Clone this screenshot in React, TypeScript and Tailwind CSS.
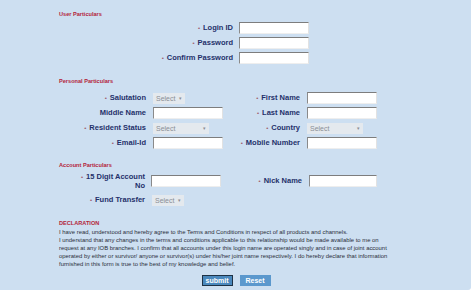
import React from 'react';

const font = "font-['Liberation_Sans',Arial,sans-serif]";

const Req = () => <span className="inline-block text-[6px] leading-none text-[#a0606e] mr-[3px]">•</span>;

const Label: React.FC<{ text: string; req?: boolean; className?: string }> = ({ text, req = true, className = '' }) => (
  <div className={`h-[12px] flex items-center justify-end text-[7.5px] font-bold text-[#24306a] leading-none whitespace-nowrap ${className}`}>
    {req && <Req />}
    {text}
  </div>
);

const TextBox: React.FC<{ w?: string }> = ({ w = 'w-[70px]' }) => (
  <div className={`${w} h-[12px] bg-white border border-t-[#7d7d7d] border-l-[#8a8a8a] border-r-[#e2e2e2] border-b-[#eeeeee]`} />
);

const SelectBox: React.FC<{ w: string }> = ({ w }) => (
  <div className={`${w} h-[11px] bg-[#e4e9ee] flex items-center justify-between px-[3px] text-[7px] leading-none text-[#8b8f96]`}>
    <span>Select</span>
    <span className="text-[5px]">▾</span>
  </div>
);

const Heading: React.FC<{ children: React.ReactNode; className?: string }> = ({ children, className = '' }) => (
  <div className={`pl-[59px] text-[5.6px] font-bold text-[#b3243a] leading-[8px] ${className}`}>{children}</div>
);

export default function App() {
  return (
    <div className={`w-[474px] h-[292px] bg-white ${font}`}>
      <div className="w-[471px] h-[290px] bg-[#cddff1] rounded-br-[3px] pt-[10px]">
        <Heading>User Particulars</Heading>

        <div className="mt-[4px] flex flex-col gap-[3px]">
          {['Login ID', 'Password', 'Confirm Password'].map((t) => (
            <div key={t} className="flex items-center">
              <Label text={t} className="w-[233px]" />
              <div className="ml-[6px]">
                <TextBox />
              </div>
            </div>
          ))}
        </div>

        <Heading className="mt-[13px]">Personal Particulars</Heading>

        <div className="mt-[7px] grid grid-cols-[146px_70px_70px_70px] gap-x-[7px] gap-y-[3px] items-center">
          <Label text="Salutation" />
          <SelectBox w="w-[32px]" />
          <Label text="First Name" />
          <TextBox />

          <Label text="Middle Name" req={false} />
          <TextBox />
          <Label text="Last Name" />
          <TextBox />

          <Label text="Resident Status" />
          <SelectBox w="w-[56px]" />
          <Label text="Country" />
          <SelectBox w="w-[56px]" />

          <Label text="Email-Id" />
          <TextBox />
          <Label text="Mobile Number" />
          <TextBox />
        </div>

        <Heading className="mt-[12px]">Account Particulars</Heading>

        <div className="mt-[3px] grid grid-cols-[145px_70px_73px_68px] gap-x-[7px] gap-y-[4px] items-center">
          <div className="text-right text-[7.5px] font-bold text-[#24306a] leading-[9px] whitespace-nowrap">
            <Req />15 Digit Account
            <br />
            No
          </div>
          <div className="-ml-[1px]">
            <TextBox />
          </div>
          <Label text="Nick Name" />
          <TextBox w="w-[68px]" />

          <Label text="Fund Transfer" />
          <SelectBox w="w-[32px]" />
          <div />
          <div />
        </div>

        <Heading className="mt-[13px]">DECLARATION</Heading>
        <div className="pl-[59px] mt-[1px] text-[5.9px] leading-[8px] text-[#2a2e3a] whitespace-nowrap">
          I have read, understood and hereby agree to the Terms and Conditions in respect of all products and channels.
          <br />
          I understand that any changes in the terms and conditions applicable to this relationship would be made available to me on
          <br />
          request at any IOB branches. I confirm that all accounts under this login name are operated singly and in case of joint account
          <br />
          operated by either or survivor/ anyone or survivor(s) under his/her joint name respectively. I do hereby declare that information
          <br />
          furnished in this form is true to the best of my knowledge and belief.
        </div>

        <div className="mt-[7px] flex justify-center gap-[7px] pl-[1px]">
          <button className="w-[31px] h-[11px] bg-[#4a88bd] border border-[#1e3246] text-white text-[7px] font-bold leading-none">
            submit
          </button>
          <button className="w-[31px] h-[11px] bg-[#5b98cd] text-white text-[7px] font-bold leading-none">
            Reset
          </button>
        </div>
      </div>
    </div>
  );
}
